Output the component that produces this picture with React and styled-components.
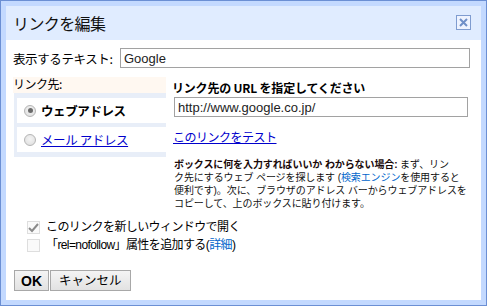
import React from "react";
import styled, { createGlobalStyle } from "styled-components";

const Global = createGlobalStyle`
  html, body { margin: 0; padding: 0; background: #fff; }
  body { font-family: "Noto Sans CJK JP", "Liberation Sans", sans-serif; color: #000; }
  * { box-sizing: border-box; }
`;

const Dialog = styled.div`
  width: 487px;
  height: 306px;
  border: 1px solid #6b8fd4;
  background: #c3d9ff;
  padding: 5px;
  display: flex;
  flex-direction: column;
`;

const TitleBar = styled.div`
  height: 34px;
  background: #e0ecff;
  display: flex;
  align-items: center;
  justify-content: space-between;
  padding: 0 10px 0 7px;
  flex-shrink: 0;
`;

const Title = styled.div`
  font-size: 16px;
  letter-spacing: -0.6px;
  color: #111;
  line-height: 1;
  margin-top: -1px;
`;

const CloseBox = styled.div`
  width: 15px;
  height: 15px;
  border: 1px solid #7f9cd0;
  background: #eef3ff;
  display: flex;
  align-items: center;
  justify-content: center;
  margin-top: -1px;
`;

const Body = styled.div`
  flex: 1;
  background: #fff;
  padding: 8px 10px 0 7px;
  display: flex;
  flex-direction: column;
`;

const Row = styled.div`
  display: flex;
  align-items: center;
`;

const Label = styled.div`
  width: 107px;
  font-size: 12.5px;
  letter-spacing: -0.4px;
  white-space: nowrap;
`;

const TextInput = styled.div`
  width: ${(p) => p.$w}px;
  height: 20px;
  border: 1px solid #a2a2a2;
  display: flex;
  align-items: center;
  padding-left: 3px;
  font-family: "Liberation Sans", sans-serif;
  font-size: 13px;
  color: #222;
`;

const LinkSection = styled.div`
  display: flex;
  margin-top: 9px;
`;

const LeftCol = styled.div`
  width: 152px;
  margin-left: 1px;
  display: flex;
  flex-direction: column;
`;

const SectionLabel = styled.div`
  height: 16px;
  background: #fff8f1;
  font-size: 12px;
  letter-spacing: -0.5px;
  line-height: 14px;
  margin-left: -1px;
`;

const Tabs = styled.div`
  background: #e8eef8;
  padding: 5px 0 5px 3px;
  display: flex;
  flex-direction: column;
  gap: 4px;
`;

const Tab = styled.div`
  height: 25px;
  background: #fff;
  display: flex;
  align-items: center;
  padding-left: 7px;
  gap: 5px;
`;

const Radio = styled.span`
  width: 12px;
  height: 12px;
  border-radius: 50%;
  border: 1px solid #b5b5b5;
  background: radial-gradient(circle at 50% 40%, #f4f4f4 0%, #dcdcdc 100%);
  display: flex;
  align-items: center;
  justify-content: center;
  &::after {
    content: "";
    display: ${(p) => (p.$on ? "block" : "none")};
    width: 5px;
    height: 5px;
    border-radius: 50%;
    background: #6a6a6a;
  }
`;

const TabText = styled.span`
  font-size: 12.5px;
  letter-spacing: -0.4px;
  font-weight: ${(p) => (p.$bold ? 700 : 400)};
  color: ${(p) => (p.$link ? "#0000cc" : "#000")};
  text-decoration: ${(p) => (p.$link ? "underline" : "none")};
`;

const RightCol = styled.div`
  flex: 1;
  padding-left: 6px;
  display: flex;
  flex-direction: column;
`;

const Heading = styled.div`
  font-size: 12px;
  font-weight: 700;
  letter-spacing: -0.2px;
  margin-top: 3px;
  line-height: 16px;
`;

const UrlInputWrap = styled.div`
  margin-top: 1px;
  margin-left: 2px;
`;

const TestLink = styled.a`
  font-size: 12px;
  letter-spacing: -0.5px;
  color: #0000cc;
  text-decoration: underline;
  margin-top: 12px;
  line-height: 16px;
  margin-left: 1px;
`;

const Help = styled.div`
  margin-top: 13px;
  margin-left: 2px;
  font-family: "Liberation Sans", "Noto Sans CJK JP", sans-serif;
  font-size: 10px;
  line-height: 13px;
  letter-spacing: -0.1px;
  white-space: nowrap;
  color: #111;
  b { font-weight: 700; color: #1a0a0a; }
`;

const Blue = styled.span`
  color: #0066cc;
`;

const Checks = styled.div`
  margin-top: 11px;
  display: flex;
  flex-direction: column;
  gap: 5px;
  padding-left: 14px;
`;

const CheckRow = styled.div`
  display: flex;
  align-items: center;
  gap: 6px;
  font-family: "Liberation Sans", "Noto Sans CJK JP", sans-serif;
  font-size: 12px;
  letter-spacing: -0.6px;
  line-height: 13px;
`;

const Box = styled.span`
  width: 13px;
  height: 13px;
  border: 1px solid #dedede;
  background: #fafafa;
  display: flex;
  align-items: center;
  justify-content: center;
`;

const Buttons = styled.div`
  display: flex;
  margin-top: 18px;
  gap: 1px;
  margin-left: 1px;
`;

const Button = styled.button`
  height: 21px;
  padding: 0 ${(p) => p.$pad}px;
  border: 1px solid #a8a8a8;
  background: linear-gradient(#f4f4f4, #e2e2e2);
  font-family: ${(p) => (p.$latin ? '"Liberation Sans", sans-serif' : '"Noto Sans CJK JP", sans-serif')};
  font-size: ${(p) => (p.$latin ? 14 : 12.5)}px;
  font-weight: ${(p) => (p.$bold ? 700 : 400)};
  color: #000;
  line-height: 1;
  display: flex;
  align-items: center;
`;

export default function App() {
  return (
    <>
      <Global />
      <Dialog>
        <TitleBar>
          <Title>リンクを編集</Title>
          <CloseBox>
            <svg width="9" height="9" viewBox="0 0 9 9">
              <path d="M1 1 L8 8 M8 1 L1 8" stroke="#6f8fc8" strokeWidth="2" />
            </svg>
          </CloseBox>
        </TitleBar>
        <Body>
          <Row>
            <Label>表示するテキスト:</Label>
            <TextInput $w={350}>Google</TextInput>
          </Row>
          <LinkSection>
            <LeftCol>
              <SectionLabel>リンク先:</SectionLabel>
              <Tabs>
                <Tab>
                  <Radio $on />
                  <TabText $bold>ウェブアドレス</TabText>
                </Tab>
                <Tab>
                  <Radio />
                  <TabText $link>メール アドレス</TabText>
                </Tab>
              </Tabs>
            </LeftCol>
            <RightCol>
              <Heading>リンク先の URL を指定してください</Heading>
              <UrlInputWrap>
                <TextInput $w={294}>http://www.google.co.jp/</TextInput>
              </UrlInputWrap>
              <TestLink>このリンクをテスト</TestLink>
              <Help>
                <b>ボックスに何を入力すればいいか わからない場合:</b> まず、リン
                <br />
                ク先にするウェブ ページを探します (<Blue>検索エンジン</Blue>を使用すると
                <br />
                便利です)。次に、ブラウザのアドレス バーからウェブアドレスを
                <br />
                コピーして、上のボックスに貼り付けます。
              </Help>
            </RightCol>
          </LinkSection>
          <Checks>
            <CheckRow>
              <Box>
                <svg width="11" height="10" viewBox="0 0 11 10">
                  <path d="M1 5 L4 8 L10 1" stroke="#8a8a8a" strokeWidth="2" fill="none" />
                </svg>
              </Box>
              <span>このリンクを新しいウィンドウで開く</span>
            </CheckRow>
            <CheckRow>
              <Box />
              <span>
                「rel=nofollow」属性を追加する(<Blue>詳細</Blue>)
              </span>
            </CheckRow>
          </Checks>
          <Buttons>
            <Button $latin $bold $pad={6}>OK</Button>
            <Button $pad={8}>キャンセル</Button>
          </Buttons>
        </Body>
      </Dialog>
    </>
  );
}
